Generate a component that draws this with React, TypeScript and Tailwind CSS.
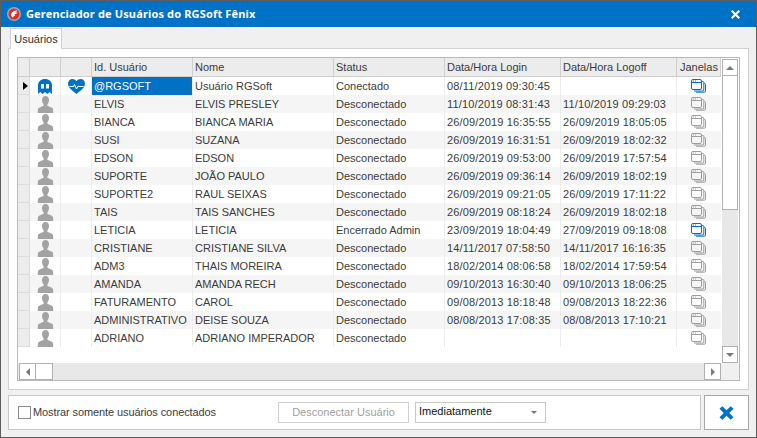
import React from 'react';

type Row = {
  id: string;
  nome: string;
  status: string;
  login: string;
  logoff: string;
  janelaAtiva?: boolean;
};

const rows: Row[] = [
  { id: '@RGSOFT', nome: 'Usuário RGSoft', status: 'Conectado', login: '08/11/2019 09:30:45', logoff: '', janelaAtiva: true },
  { id: 'ELVIS', nome: 'ELVIS PRESLEY', status: 'Desconectado', login: '11/10/2019 08:31:43', logoff: '11/10/2019 09:29:03' },
  { id: 'BIANCA', nome: 'BIANCA MARIA', status: 'Desconectado', login: '26/09/2019 16:35:55', logoff: '26/09/2019 18:05:05' },
  { id: 'SUSI', nome: 'SUZANA', status: 'Desconectado', login: '26/09/2019 16:31:51', logoff: '26/09/2019 18:02:32' },
  { id: 'EDSON', nome: 'EDSON', status: 'Desconectado', login: '26/09/2019 09:53:00', logoff: '26/09/2019 17:57:54' },
  { id: 'SUPORTE', nome: 'JOÃO PAULO', status: 'Desconectado', login: '26/09/2019 09:36:14', logoff: '26/09/2019 18:02:19' },
  { id: 'SUPORTE2', nome: 'RAUL SEIXAS', status: 'Desconectado', login: '26/09/2019 09:21:05', logoff: '26/09/2019 17:11:22' },
  { id: 'TAIS', nome: 'TAIS SANCHES', status: 'Desconectado', login: '26/09/2019 08:18:24', logoff: '26/09/2019 18:02:18' },
  { id: 'LETICIA', nome: 'LETICIA', status: 'Encerrado Admin', login: '23/09/2019 18:04:49', logoff: '27/09/2019 09:18:08', janelaAtiva: true },
  { id: 'CRISTIANE', nome: 'CRISTIANE SILVA', status: 'Desconectado', login: '14/11/2017 07:58:50', logoff: '14/11/2017 16:16:35' },
  { id: 'ADM3', nome: 'THAIS MOREIRA', status: 'Desconectado', login: '18/02/2014 08:06:58', logoff: '18/02/2014 17:59:54' },
  { id: 'AMANDA', nome: 'AMANDA RECH', status: 'Desconectado', login: '09/10/2013 16:30:40', logoff: '09/10/2013 18:06:25' },
  { id: 'FATURAMENTO', nome: 'CAROL', status: 'Desconectado', login: '09/08/2013 18:18:48', logoff: '09/08/2013 18:22:36' },
  { id: 'ADMINISTRATIVO', nome: 'DEISE SOUZA', status: 'Desconectado', login: '08/08/2013 17:08:35', logoff: '08/08/2013 17:10:21' },
  { id: 'ADRIANO', nome: 'ADRIANO IMPERADOR', status: 'Desconectado', login: '', logoff: '' },
];

const UserIcon = () => (
  <svg width="17" height="17" viewBox="0 0 17 17" fill="#a3a3a3">
    <path d="M8.500 0c2.300 0 3.500 1.700 3.500 4 0 1.800-.8 3.300-1.600 4.200v1.500c.5.700 4.100 1.300 5.300 2.800.5.700.5 2 .5 4.500H.8c0-2.500 0-3.800.5-4.500 1.200-1.500 4.800-2.100 5.300-2.800V8.200C5.800 7.300 5 5.800 5 4 5 1.700 6.200 0 8.500 0z" />
  </svg>
);

const GhostIcon = () => (
  <svg width="14" height="15" viewBox="0 0 14 15">
    <path fill="#0072c6" d="M0 15V6.500C0 2.500 3 0 7 0s7 2.500 7 6.500V15l-2.300-2-2.300 2L7 13l-2.400 2-2.300-2z" />
    <rect x="3" y="5" width="3" height="4.500" fill="#fff" />
    <rect x="8" y="5" width="3" height="4.500" fill="#fff" />
  </svg>
);

const HeartIcon = () => (
  <svg width="17" height="15" viewBox="0 0 17 15">
    <path fill="#0072c6" d="M8.500 15C3.500 11 0 8.200 0 4.500 0 1.900 2 0 4.400 0 6 0 7.500.8 8.500 2.300 9.500.8 11 0 12.600 0 15 0 17 1.900 17 4.500c0 3.700-3.500 6.500-8.500 10.500z" />
    <path fill="none" stroke="#fff" strokeWidth="1" d="M1.500 7.500h4l1-2 2 4.500 1.500-3 1 .5h4.500" />
  </svg>
);

const WindowsIcon = ({ active }: { active?: boolean }) => {
  const c = active ? '#0072c6' : '#9d9d9d';
  return (
    <svg width="15" height="14" viewBox="0 0 15 14" fill="none" stroke={c} strokeWidth="1">
      <rect x="0.500" y="0.500" width="10" height="10" rx="1.500" />
      <path d="M1 3.500h9" />
      <path d="M2 2h1M4 2h1" />
      <path d="M11 2.500h.8a1 1 0 0 1 1 1V11a1 1 0 0 1-1 1H3" />
      <path d="M13 4.500h.5a1 1 0 0 1 1 1v6.500a1.200 1.200 0 0 1-1.200 1.200H5" />
    </svg>
  );
};

// colunas da grade, iguais ao cabeçalho
const columns = 'grid grid-cols-[12px_31px_31px_101px_141px_111px_116px_116px_44px]';

const App: React.FC = () => {
  return (
    <div
      className="w-[757px] h-[438px] flex flex-col bg-[#f0f0f0] border border-[#5e5e5e] overflow-hidden text-[11px] text-[#3b3b3b]"
      style={{ fontFamily: '"Liberation Sans", sans-serif' }}
    >
      {/* Barra de título */}
      <div className="h-[26px] shrink-0 bg-[#0072c6] flex items-center pl-[6px] pr-[16px] text-white">
        <svg width="14" height="14" viewBox="0 0 14 14">
          <circle cx="7" cy="7" r="7" fill="#a8a8a8" />
          <circle cx="7" cy="7" r="5.500" fill="#d9302c" />
          <path d="M4 8.500C4 5.500 6.500 3.500 10.500 3.500L8.500 5.500 11 5.500 7 8 8.500 8 5.500 10.500z" fill="#fff" />
        </svg>
        <span className="ml-[5px] font-bold text-[11px] tracking-[0.15px]" style={{ fontFamily: '"Noto Sans", sans-serif' }}>
          Gerenciador de Usuários do RGSoft Fênix
        </span>
        <svg className="ml-auto" width="9" height="9" viewBox="0 0 9 9" stroke="#fff" strokeWidth="2">
          <path d="M.700.700l7.600 7.600M8.300.700L.700 8.300" />
        </svg>
      </div>

      {/* Abas */}
      <div className="h-[21px] shrink-0 pl-[9px] flex items-end">
        <div className="relative z-10 w-[52px] h-[21px] -mb-px bg-white border border-b-0 border-[#d0d0d0] flex items-center justify-center text-[#2f2f2f]">
          Usuários
        </div>
      </div>

      <div className="mx-[7px] h-[342px] shrink-0 bg-white border border-[#d0d0d0] p-[8px]">
        {/* Grade */}
        <div className="w-[723px] h-[324px] border border-[#b9b9b9] bg-white flex flex-col">
          <div className="flex-1 flex min-h-0">
            <div className="w-[703px] flex flex-col">
              <div className={`${columns} h-[19px] shrink-0`}>
                {['', '', '', 'Id. Usuário', 'Nome', 'Status', 'Data/Hora Login', 'Data/Hora Logoff', 'Janelas'].map((h, i) => (
                  <div key={i} className={`border-r border-b border-[#cfcfcf] flex items-center bg-[#ececec] whitespace-nowrap overflow-hidden ${i === 8 ? 'pl-[3px]' : 'pl-[2px]'}`}>
                    {h}
                  </div>
                ))}
              </div>
              {rows.map((r, i) => (
                <div key={r.id} className={`${columns} h-[18px] shrink-0 ${i % 2 === 1 ? 'bg-[#f5f5f5]' : 'bg-white'}`}>
                  <div className="bg-[#ececec] border-r border-b border-[#dcdcdc] flex items-center pl-[5px]">
                    {i === 0 && <div className="w-0 h-0 border-y-[4.500px] border-y-transparent border-l-[5px] border-l-black" />}
                  </div>
                  <div className="flex items-center justify-center border-r border-[#ececec]">
                    {i === 0 ? <GhostIcon /> : <UserIcon />}
                  </div>
                  <div className="flex items-center justify-center border-r border-[#ececec]">
                    {i === 0 && <HeartIcon />}
                  </div>
                  <div className={`pl-[2px] flex items-center whitespace-nowrap border-r border-[#ececec] ${i === 0 ? 'bg-[#0072c6] text-white' : ''}`}>
                    {r.id}
                  </div>
                  <div className="pl-[2px] flex items-center whitespace-nowrap border-r border-[#ececec]">{r.nome}</div>
                  <div className="pl-[2px] flex items-center whitespace-nowrap border-r border-[#ececec]">{r.status}</div>
                  <div className="pl-[2px] flex items-center whitespace-nowrap border-r border-[#ececec] tracking-[0.15px]">{r.login}</div>
                  <div className="pl-[2px] flex items-center whitespace-nowrap border-r border-[#ececec] tracking-[0.15px]">{r.logoff}</div>
                  <div className="flex items-center justify-center pr-[2px]">
                    <WindowsIcon active={r.janelaAtiva} />
                  </div>
                </div>
              ))}
            </div>

            {/* Barra de rolagem vertical */}
            <div className="w-[16px] ml-px mt-px bg-[#e8e8e8] flex flex-col">
              <div className="h-[17px] shrink-0 bg-white border border-[#b0b0b0] flex items-center justify-center">
                <div className="w-0 h-0 border-x-[4px] border-x-transparent border-b-[4px] border-b-[#7a7a7a]" />
              </div>
              <div className="h-[134px] shrink-0 bg-white border-x border-b border-[#b0b0b0]" />
              <div className="flex-1" />
              <div className="h-[17px] shrink-0 bg-white border border-[#b0b0b0] flex items-center justify-center">
                <div className="w-0 h-0 border-x-[4px] border-x-transparent border-t-[4px] border-t-[#7a7a7a]" />
              </div>
            </div>
          </div>

          {/* Barra de rolagem horizontal */}
          <div className="h-[17px] shrink-0 flex">
            <div className="w-[703px] bg-[#e8e8e8] flex pl-px">
              <div className="w-[17px] bg-white border border-[#b0b0b0] flex items-center justify-center">
                <div className="w-0 h-0 border-y-[4px] border-y-transparent border-r-[4px] border-r-[#7a7a7a]" />
              </div>
              <div className="w-[17px] bg-white border-y border-r border-[#b0b0b0]" />
              <div className="flex-1" />
              <div className="w-[17px] bg-white border border-[#b0b0b0] flex items-center justify-center">
                <div className="w-0 h-0 border-y-[4px] border-y-transparent border-l-[4px] border-l-[#7a7a7a]" />
              </div>
            </div>
            <div className="flex-1 bg-[#f0f0f0]" />
          </div>
        </div>
      </div>

      {/* Rodapé */}
      <div className="mt-[5px] mx-[7px] flex gap-[3px]">
        <div className="w-[693px] h-[35px] bg-white border border-[#c8c8c8] flex items-center pl-[9px]">
          <div className="w-[13px] h-[13px] border border-[#8a8a8a] bg-white" />
          <span className="ml-[2px] w-[245px] whitespace-nowrap tracking-[-0.1px]">Mostrar somente usuários conectados</span>
          <div className="w-[131px] h-[21px] border border-[#d0d0d0] flex items-center justify-center text-[#a0a0a0]">
            Desconectar Usuário
          </div>
          <div className="ml-[6px] w-[131px] h-[21px] border border-[#c8c8c8] flex items-center pl-[3px] pb-[2px] text-[#111]">
            Imediatamente
            <div className="ml-auto mr-[8px] mt-[2px] w-0 h-0 border-x-[3px] border-x-transparent border-t-[3px] border-t-[#777]" />
          </div>
        </div>
        <div className="w-[45px] h-[35px] bg-white border border-[#a8a8a8] flex items-center justify-center">
          <svg width="15" height="14" viewBox="0 0 16 15">
            <path fill="#0072c6" d="M3.500.300 8 4.500 12.500.300 15.500 3 11 7.500l4.500 4.500-3 2.800L8 10.500l-4.500 4.300-3-2.800L5 7.500 .500 3z" />
          </svg>
        </div>
      </div>
    </div>
  );
};

export default App;
